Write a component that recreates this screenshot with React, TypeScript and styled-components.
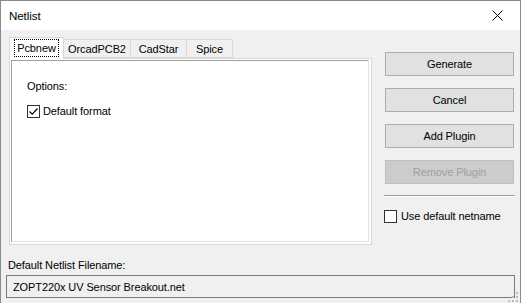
import React from "react";
import styled, { createGlobalStyle } from "styled-components";

const Global = createGlobalStyle`
  html, body { margin: 0; padding: 0; background: #ffffff; }
  * { box-sizing: border-box; }
  body { font-family: "Liberation Sans", Arial, sans-serif; font-size: 11px; letter-spacing: -0.1px; color: #000; }
`;

const Window = styled.div`
  width: 521px;
  height: 303px;
  border: 1px solid #8a8a8a;
  border-bottom: none;
  background: #f0f0f0;
  display: flex;
  flex-direction: column;
  position: relative;
  overflow: hidden;
`;

const TitleBar = styled.div`
  height: 29px;
  background: #ffffff;
  display: flex;
  align-items: center;
  justify-content: space-between;
  padding: 0 0 0 8px;
  font-size: 11.6px;
`;

const CloseBtn = styled.div`
  width: 46px;
  height: 29px;
  display: flex;
  align-items: center;
  justify-content: center;
`;

const Body = styled.div`
  flex: 1;
  display: flex;
  flex-direction: column;
  padding: 7px 5px 0 5px;
`;

const MainRow = styled.div`
  display: flex;
  padding-left: 3px;
  gap: 12px;
`;

const LeftCol = styled.div`
  width: 363px;
  display: flex;
  flex-direction: column;
`;

const TabStrip = styled.div`
  height: 21px;
  display: flex;
  align-items: flex-end;
  position: relative;
  z-index: 1;
`;

const Tab = styled.div<{ $active?: boolean; $w: number }>`
  width: ${(p) => p.$w}px;
  height: ${(p) => (p.$active ? 22 : 19)}px;
  margin-bottom: ${(p) => (p.$active ? -1 : 0)}px;
  background: ${(p) => (p.$active ? "#ffffff" : "#f0f0f0")};
  border: 1px solid #d9d9d9;
  border-bottom: ${(p) => (p.$active ? "none" : "1px solid #d9d9d9")};
  margin-left: ${(p) => (p.$active ? 0 : -1)}px;
  display: flex;
  align-items: center;
  justify-content: center;
  padding-bottom: ${(p) => (p.$active ? 2 : 0)}px;
  &:first-child { margin-left: 0; }
`;

const Focus = styled.span`
  outline: 1px dotted #000;
  outline-offset: 0px;
  padding: 1px 2px;
  line-height: 14px;
`;

const Panel = styled.div`
  height: 187px;
  border: 1px solid #d9d9d9;
  background: #ffffff;
  padding: 1px 2px 2px 1px;
  display: flex;
`;

const Inner = styled.div`
  flex: 1;
  border-top: 1px solid #a0a0a0;
  border-left: 1px solid #a0a0a0;
  border-right: 1px solid #e3e3e3;
  border-bottom: 1px solid #e3e3e3;
  padding: 18px 0 0 15px;
  display: flex;
  flex-direction: column;
  gap: 11px;
`;

const Label = styled.div`
  line-height: 14px;
`;

const CheckRow = styled.label`
  display: flex;
  align-items: center;
  gap: 3px;
  line-height: 14px;
`;

const Box = styled.span`
  width: 13px;
  height: 13px;
  border: 1px solid #333333;
  background: #ffffff;
  display: inline-flex;
  align-items: center;
  justify-content: center;
`;

const RightCol = styled.div`
  width: 131px;
  display: flex;
  flex-direction: column;
  padding-top: 15px;
`;

const Button = styled.div<{ $disabled?: boolean }>`
  width: 129px;
  height: 24px;
  margin-left: 1px;
  margin-bottom: 12px;
  border: 1px solid ${(p) => (p.$disabled ? "#bfbfbf" : "#adadad")};
  background: ${(p) => (p.$disabled ? "#cccccc" : "#e1e1e1")};
  color: ${(p) => (p.$disabled ? "#a0a0a0" : "#000")};
  display: flex;
  align-items: center;
  justify-content: center;
`;

const Separator = styled.div`
  margin-top: -1px;
  height: 2px;
  border-top: 1px solid #a0a0a0;
  border-bottom: 1px solid #ffffff;
`;

const NetnameRow = styled(CheckRow)`
  margin-top: 12px;
  gap: 4px;
`;

const FileLabel = styled.div`
  margin-top: 13px;
  padding-left: 2px;
  line-height: 14px;
`;

const FileInput = styled.div`
  margin-top: 3px;
  width: 509px;
  height: 23px;
  border: 1px solid #7a7a7a;
  background: #f0f0f0;
  display: flex;
  align-items: center;
  padding-left: 6px;
`;

const Grip = styled.svg`
  position: absolute;
  right: 2px;
  bottom: 1px;
`;

export default function App() {
  return (
    <>
      <Global />
      <Window>
        <TitleBar>
          <span>Netlist</span>
          <CloseBtn>
            <svg width="11" height="11" viewBox="0 0 11 11">
              <path d="M0.5 0.5 L10.5 10.5 M10.5 0.5 L0.5 10.5" stroke="#000" strokeWidth="1" />
            </svg>
          </CloseBtn>
        </TitleBar>
        <Body>
          <MainRow>
            <LeftCol>
              <TabStrip>
                <Tab $active $w={55}><Focus>Pcbnew</Focus></Tab>
                <Tab $w={68}>OrcadPCB2</Tab>
                <Tab $w={57}>CadStar</Tab>
                <Tab $w={47}>Spice</Tab>
              </TabStrip>
              <Panel>
                <Inner>
                  <Label>Options:</Label>
                  <CheckRow>
                    <Box>
                      <svg width="11" height="11" viewBox="0 0 11 11">
                        <path d="M1.5 5.5 L4.2 8.2 L9.5 2.5" stroke="#000" strokeWidth="1.2" fill="none" />
                      </svg>
                    </Box>
                    Default format
                  </CheckRow>
                </Inner>
              </Panel>
            </LeftCol>
            <RightCol>
              <Button>Generate</Button>
              <Button>Cancel</Button>
              <Button>Add Plugin</Button>
              <Button $disabled>Remove Plugin</Button>
              <Separator />
              <NetnameRow>
                <Box />
                Use default netname
              </NetnameRow>
            </RightCol>
          </MainRow>
          <FileLabel>Default Netlist Filename:</FileLabel>
          <FileInput>ZOPT220x UV Sensor Breakout.net</FileInput>
        </Body>
        <Grip width="10" height="10" viewBox="0 0 10 10">
          <rect x="8" y="0" width="2" height="2" fill="#bcbcbc" />
          <rect x="4" y="4" width="2" height="2" fill="#bcbcbc" />
          <rect x="8" y="4" width="2" height="2" fill="#bcbcbc" />
          <rect x="0" y="8" width="2" height="2" fill="#bcbcbc" />
          <rect x="4" y="8" width="2" height="2" fill="#bcbcbc" />
          <rect x="8" y="8" width="2" height="2" fill="#bcbcbc" />
        </Grip>
      </Window>
    </>
  );
}
